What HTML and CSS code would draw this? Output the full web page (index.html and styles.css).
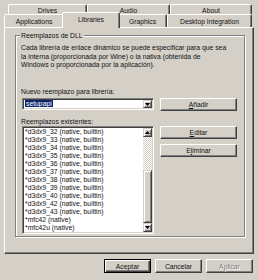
FILE: index.html
```html
<!DOCTYPE html>
<html lang="es">
<head>
    <meta charset="UTF-8">
    <meta name="viewport" content="width=device-width, initial-scale=1.0">
    <link rel="stylesheet" href="styles.css">
    <title>Configuración de Wine</title>
</head>
<body>
<div class="dialog">
    <div class="tabs">
        <div class="tab-row back">
            <div class="tab w-drives">Drives</div>
            <div class="tab w-audio">Audio</div>
            <div class="tab w-about">About</div>
        </div>
        <div class="tab-row front">
            <div class="tab w-apps">Applications</div>
            <div class="tab w-libs selected">Libraries</div>
            <div class="tab w-graphics">Graphics</div>
            <div class="tab w-desktop">Desktop Integration</div>
        </div>
    </div>

    <div class="panel">
        <div class="group">
            <div class="group-title">Reemplazos de DLL</div>
            <p class="info">Cada librería de enlace dinámico se puede especificar para que sea<br>la interna (proporcionada por Wine) o la nativa (obtenida de<br>Windows o proporcionada por la aplicación).</p>

            <div class="label first">Nuevo reemplazo para librería:</div>
            <div class="row">
                <div class="combo">
                    <span class="combo-text"><span class="sel">setupapi</span></span>
                    <span class="small-btn"><svg width="5" height="3" viewBox="0 0 5 3"><polygon points="0,0 5,0 2.5,3"/></svg></span>
                </div>
                <button class="btn side-btn"><u>A</u>ñadir</button>
            </div>

            <div class="label">Reemplazos existentes:</div>
            <div class="row list-row">
                <div class="listbox">
                    <ul class="items">
                        <li>*d3dx9_32 (native, builtin)</li>
                        <li>*d3dx9_33 (native, builtin)</li>
                        <li>*d3dx9_34 (native, builtin)</li>
                        <li>*d3dx9_35 (native, builtin)</li>
                        <li>*d3dx9_36 (native, builtin)</li>
                        <li>*d3dx9_37 (native, builtin)</li>
                        <li>*d3dx9_38 (native, builtin)</li>
                        <li>*d3dx9_39 (native, builtin)</li>
                        <li>*d3dx9_40 (native, builtin)</li>
                        <li>*d3dx9_42 (native, builtin)</li>
                        <li>*d3dx9_43 (native, builtin)</li>
                        <li>*mfc42 (native)</li>
                        <li>*mfc42u (native)</li>
                    </ul>
                    <div class="scrollbar">
                        <span class="small-btn sb-btn"><svg width="5" height="3" viewBox="0 0 5 3"><polygon points="0,3 5,3 2.5,0"/></svg></span>
                        <span class="sb-track"></span>
                        <span class="sb-thumb"></span>
                        <span class="small-btn sb-btn"><svg width="5" height="3" viewBox="0 0 5 3"><polygon points="0,0 5,0 2.5,3"/></svg></span>
                    </div>
                </div>
                <div class="side-col">
                    <button class="btn side-btn"><u>E</u>ditar</button>
                    <button class="btn side-btn">E<u>l</u>iminar</button>
                </div>
            </div>
        </div>
    </div>

    <div class="actions">
        <button class="btn default">Aceptar</button>
        <button class="btn">Cancelar</button>
        <button class="btn" disabled>Aplicar</button>
    </div>
</div>
</body>
</html>
```

FILE: styles.css
```css
body {
    margin: 0;
    background-color: #d4d0c8;
    font-family: "Liberation Sans", Arial, sans-serif;
    font-size: 6.8px;
    color: #111;
}
.dialog {
    width: 258px;
    height: 280px;
    padding: 4px 4px 0;
    box-sizing: border-box;
}

/* tabs */
.tab-row {
    display: flex;
}
.tab-row.back {
    height: 10px;
    padding-left: 4px;
}
.tab-row.front {
    height: 13px;
}
.tab {
    box-sizing: border-box;
    display: flex;
    align-items: center;
    justify-content: center;
    white-space: nowrap;
    line-height: 9px;
    border-top: 1px solid #fff;
    border-left: 1px solid #fff;
    border-right: 1px solid #404040;
    border-radius: 2px 2px 0 0;
    box-shadow: inset -1px 0 0 #808080;
    background-color: #d4d0c8;
}
.back .tab {
    padding-top: 1px;
}
.w-drives { width: 79px; }
.w-audio { width: 83px; }
.w-about { width: 82px; }
.w-apps { width: 60px; }
.w-libs { width: 54px; }
.w-graphics { width: 49px; }
.w-desktop { width: 85px; }
.tab.selected {
    position: relative;
    z-index: 1;
    width: 58px;
    height: 16px;
    margin: -2px -2px -1px;
    padding-bottom: 2px;
}

/* panel + group box */
.panel {
    height: 227px;
    box-sizing: border-box;
    border: 1px solid;
    border-color: #fff #404040 #404040 #fff;
    box-shadow: inset -1px -1px 0 #808080;
    padding: 7px 0 0 10px;
}
.group {
    width: 230px;
    box-sizing: border-box;
    border: 1px solid #808080;
    box-shadow: inset 1px 1px 0 #fff, 1px 1px 0 #fff;
    padding: 0 0 2px 5px;
}
.group-title {
    width: fit-content;
    margin: -5px 0 0 -1px;
    padding: 0 1px;
    line-height: 9px;
    background-color: #d4d0c8;
}
.info {
    margin: 4px 0 0;
    line-height: 8.5px;
    white-space: nowrap;
}
.label {
    line-height: 8px;
    margin-top: 7px;
}
.label.first {
    margin-top: 18.5px;
}
.row {
    display: flex;
    margin-top: 2px;
}
.row.list-row {
    margin-top: 0;
}

/* sunken fields */
.combo,
.listbox {
    width: 132px;
    margin-left: 1px;
    box-sizing: border-box;
    display: flex;
    padding: 1px;
    border: 1px solid;
    border-color: #808080 #fff #fff #808080;
    box-shadow: inset 1px 1px 0 #404040, inset -1px -1px 0 #d4d0c8;
    background-color: #fff;
}
.combo {
    height: 12px;
}
.combo-text {
    flex: 1;
    line-height: 8px;
    padding-left: 1px;
}
.sel {
    background-color: #0a246a;
    color: #fff;
    padding: 0 1px;
}
.small-btn {
    width: 9px;
    height: 8px;
    box-sizing: border-box;
    display: flex;
    align-items: center;
    justify-content: center;
    border: 1px solid;
    border-color: #d4d0c8 #404040 #404040 #d4d0c8;
    box-shadow: inset 1px 1px 0 #fff, inset -1px -1px 0 #808080;
    background-color: #d4d0c8;
}
.listbox {
    height: 108px;
}
.items {
    flex: 1;
    margin: 0;
    padding: 0 0 0 1px;
    list-style-type: none;
    line-height: 8px;
    white-space: nowrap;
    overflow: hidden;
}
.scrollbar {
    width: 9px;
    display: flex;
    flex-direction: column;
}
.sb-btn {
    height: 9px;
}
.sb-track {
    height: 33px;
    background: repeating-conic-gradient(#fff 0 25%, #d4d0c8 0 50%) 0 0 / 2px 2px;
}
.sb-thumb {
    flex: 1;
    box-sizing: border-box;
    border: 1px solid;
    border-color: #d4d0c8 #404040 #404040 #d4d0c8;
    box-shadow: inset 1px 1px 0 #fff, inset -1px -1px 0 #808080;
    background-color: #d4d0c8;
}

/* buttons */
.btn {
    box-sizing: border-box;
    height: 14px;
    width: 47px;
    padding: 0;
    font-family: inherit;
    font-size: 6.8px;
    color: #111;
    background-color: #d4d0c8;
    border: 1px solid;
    border-color: #fff #404040 #404040 #fff;
    box-shadow: inset -1px -1px 0 #808080;
}
.btn:disabled {
    color: #808080;
    text-shadow: 1px 1px 0 #fff;
}
.btn.default {
    border-color: #000;
    box-shadow: inset 1px 1px 0 #fff, inset -1px -1px 0 #404040, inset -2px -2px 0 #808080;
}
.side-btn {
    width: 77px;
    height: 13px;
    margin-left: 6px;
}
.side-col {
    display: flex;
    flex-direction: column;
    gap: 5px;
}
.actions {
    display: flex;
    justify-content: flex-end;
    gap: 4px;
    margin-top: 5px;
    padding-right: 1px;
}
```
